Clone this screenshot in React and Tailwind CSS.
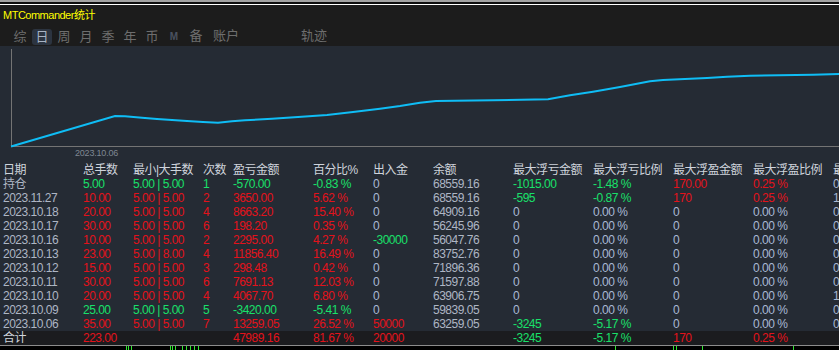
import React from 'react';

const font = { fontFamily: '"Liberation Sans", "Noto Sans CJK SC", sans-serif' };

const tone = {
  r: 'text-[#e3121b]',
  g: 'text-[#19e06a]',
  n: 'text-[#a9b9d4]',
  d: 'text-[#aeb6c4]',
  h: 'text-[#cfd4dc]',
};

const Z = ['0', '0.00 %', 'n'];

const rows = [
  { d: '持仓', c: 'g', v: ['5.00', '5.00 | 5.00', '1', '-570.00', '-0.83 %'], io: ['0', 'n'], bal: '68559.16', fl: ['-1015.00', '-1.48 %', 'g'], fp: ['170.00', '0.25 %', 'r'], last: '0' },
  { d: '2023.11.27', c: 'r', v: ['10.00', '5.00 | 5.00', '2', '3650.00', '5.62 %'], io: ['0', 'n'], bal: '68559.16', fl: ['-595', '-0.87 %', 'g'], fp: ['170', '0.25 %', 'r'], last: '1' },
  { d: '2023.10.18', c: 'r', v: ['20.00', '5.00 | 5.00', '4', '8663.20', '15.40 %'], io: ['0', 'n'], bal: '64909.16', fl: Z, fp: Z, last: '0' },
  { d: '2023.10.17', c: 'r', v: ['30.00', '5.00 | 5.00', '6', '198.20', '0.35 %'], io: ['0', 'n'], bal: '56245.96', fl: Z, fp: Z, last: '0' },
  { d: '2023.10.16', c: 'r', v: ['10.00', '5.00 | 5.00', '2', '2295.00', '4.27 %'], io: ['-30000', 'g'], bal: '56047.76', fl: Z, fp: Z, last: '0' },
  { d: '2023.10.13', c: 'r', v: ['23.00', '5.00 | 8.00', '4', '11856.40', '16.49 %'], io: ['0', 'n'], bal: '83752.76', fl: Z, fp: Z, last: '0' },
  { d: '2023.10.12', c: 'r', v: ['15.00', '5.00 | 5.00', '3', '298.48', '0.42 %'], io: ['0', 'n'], bal: '71896.36', fl: Z, fp: Z, last: '0' },
  { d: '2023.10.11', c: 'r', v: ['30.00', '5.00 | 5.00', '6', '7691.13', '12.03 %'], io: ['0', 'n'], bal: '71597.88', fl: Z, fp: Z, last: '0' },
  { d: '2023.10.10', c: 'r', v: ['20.00', '5.00 | 5.00', '4', '4067.70', '6.80 %'], io: ['0', 'n'], bal: '63906.75', fl: Z, fp: Z, last: '1' },
  { d: '2023.10.09', c: 'g', v: ['25.00', '5.00 | 5.00', '5', '-3420.00', '-5.41 %'], io: ['0', 'n'], bal: '59839.05', fl: Z, fp: Z, last: '0' },
  { d: '2023.10.06', c: 'r', v: ['35.00', '5.00 | 5.00', '7', '13259.05', '26.52 %'], io: ['50000', 'r'], bal: '63259.05', fl: ['-3245', '-5.17 %', 'g'], fp: Z, last: '0' },
];

const headers = ['日期', '总手数', '最小|大手数', '次数', '盈亏金额', '百分比%', '出入金', '余额', '最大浮亏金额', '最大浮亏比例', '最大浮盈金额', '最大浮盈比例', '最大持仓'];

const tabs = ['综', '日', '周', '月', '季', '年', '币'];

const grid = 'grid grid-cols-[80px_50px_70px_30px_80px_60px_60px_80px_80px_80px_80px_80px_80px] h-[14px] leading-[14px] pl-[3px] whitespace-nowrap';

const linePts = [
  [11, 100.5], [115, 70], [125, 70.3], [142, 71.7], [157, 73], [172, 74], [187, 75], [203, 76], [218, 76.7],
  [232, 75.3], [245, 74.3], [272, 72.7], [298, 71], [327, 69], [353, 66], [380, 62.7], [400, 60], [420, 56.7],
  [436, 55], [493, 54.3], [548, 53.3], [570, 49.3], [593, 45.7], [620, 41], [650, 35.3], [663, 34], [685, 33],
  [707, 32], [727, 30.7], [750, 29.7], [813, 28.7], [839, 28],
];

function Chart() {
  return (
    <svg width="839" height="117" className="block">
      <line x1="11.5" y1="3" x2="11.5" y2="101" stroke="#747474" strokeWidth="1" />
      <line x1="11" y1="100.5" x2="839" y2="100.5" stroke="#747474" strokeWidth="1" />
      <polyline
        points={linePts.map((p) => p.join(',')).join(' ')}
        fill="none"
        stroke="#0fbdf5"
        strokeWidth="2"
      />
      <text x="75" y="110" fontSize="9" letterSpacing="-0.2" fill="#7f8792" style={font}>
        2023.10.06
      </text>
    </svg>
  );
}

function Ticks() {
  const marks = [126, 128, 131, 170, 172, 175, 182, 186, 190, 194, 198, 615, 673, 676, 702, 793];
  return (
    <svg width="839" height="4" className="block">
      {marks.map((x) => (
        <rect key={x} x={x} y="0" width="1" height="4" fill="#2ee82e" />
      ))}
    </svg>
  );
}

export default function App() {
  return (
    <div className="w-[839px] h-[350px] overflow-hidden bg-[#252b34] text-[12px] tracking-[-0.5px]" style={font}>
      {/* window edge */}
      <div className="h-[2px] bg-[#a3a3a3]" />
      <div className="h-[2px] bg-[#0e0e0e]" />
      <div className="h-[1px] bg-white" />

      <div className="bg-[#1c1c1c]">
        <div className="h-[21px] pl-[3px] pt-[3px] leading-[14px] text-[11px] text-[#ffff00]">MTCommander统计</div>
        <div className="h-[20px] flex items-center pl-[9px] text-[13px] tracking-normal text-[#6e6e6e]">
          {tabs.map((t) => (
            <div key={t} className="w-[22px] flex justify-center">
              {t === '日' ? (
                <span className="h-[16px] mt-[2px] px-[3px] leading-[16px] rounded-[3px] bg-[#2c3440] text-[#a8b4c4]">{t}</span>
              ) : (
                <span className="mt-[1px]">{t}</span>
              )}
            </div>
          ))}
          <div className="w-[22px] flex justify-center text-[10px] font-bold text-[#4a5260]">M</div>
          <div className="w-[22px] flex justify-center">备</div>
          <div className="w-[38px] flex justify-center">账户</div>
          <div className="w-[38px] ml-[50px] flex justify-center">轨迹</div>
        </div>
      </div>

      <Chart />

      <div className="w-full overflow-hidden">
        <div className={`${grid} ${tone.h}`}>
          {headers.map((h) => (
            <div key={h}>{h}</div>
          ))}
        </div>

        {rows.map((r) => (
          <div key={r.d} className={grid}>
            <div className={tone.d}>{r.d}</div>
            {r.v.map((v, i) => (
              <div key={i} className={tone[r.c]}>{v}</div>
            ))}
            <div className={tone[r.io[1]]}>{r.io[0]}</div>
            <div className={tone.d}>{r.bal}</div>
            <div className={tone[r.fl[2]]}>{r.fl[0]}</div>
            <div className={tone[r.fl[2]]}>{r.fl[1]}</div>
            <div className={tone[r.fp[2]]}>{r.fp[0]}</div>
            <div className={tone[r.fp[2]]}>{r.fp[1]}</div>
            <div className={tone.n}>{r.last}</div>
          </div>
        ))}

        <div className={`${grid} bg-[#1b1c1f]`}>
          <div className={tone.h}>合计</div>
          <div className={tone.r}>223.00</div>
          <div />
          <div />
          <div className={tone.r}>47989.16</div>
          <div className={tone.r}>81.67 %</div>
          <div className={tone.r}>20000</div>
          <div />
          <div className={tone.g}>-3245</div>
          <div className={tone.g}>-5.17 %</div>
          <div className={tone.r}>170</div>
          <div className={tone.r}>0.25 %</div>
          <div />
        </div>
      </div>

      <div className="h-[1px] bg-[#8c8c8c]" />
      <div className="bg-black">
        <Ticks />
      </div>
    </div>
  );
}
